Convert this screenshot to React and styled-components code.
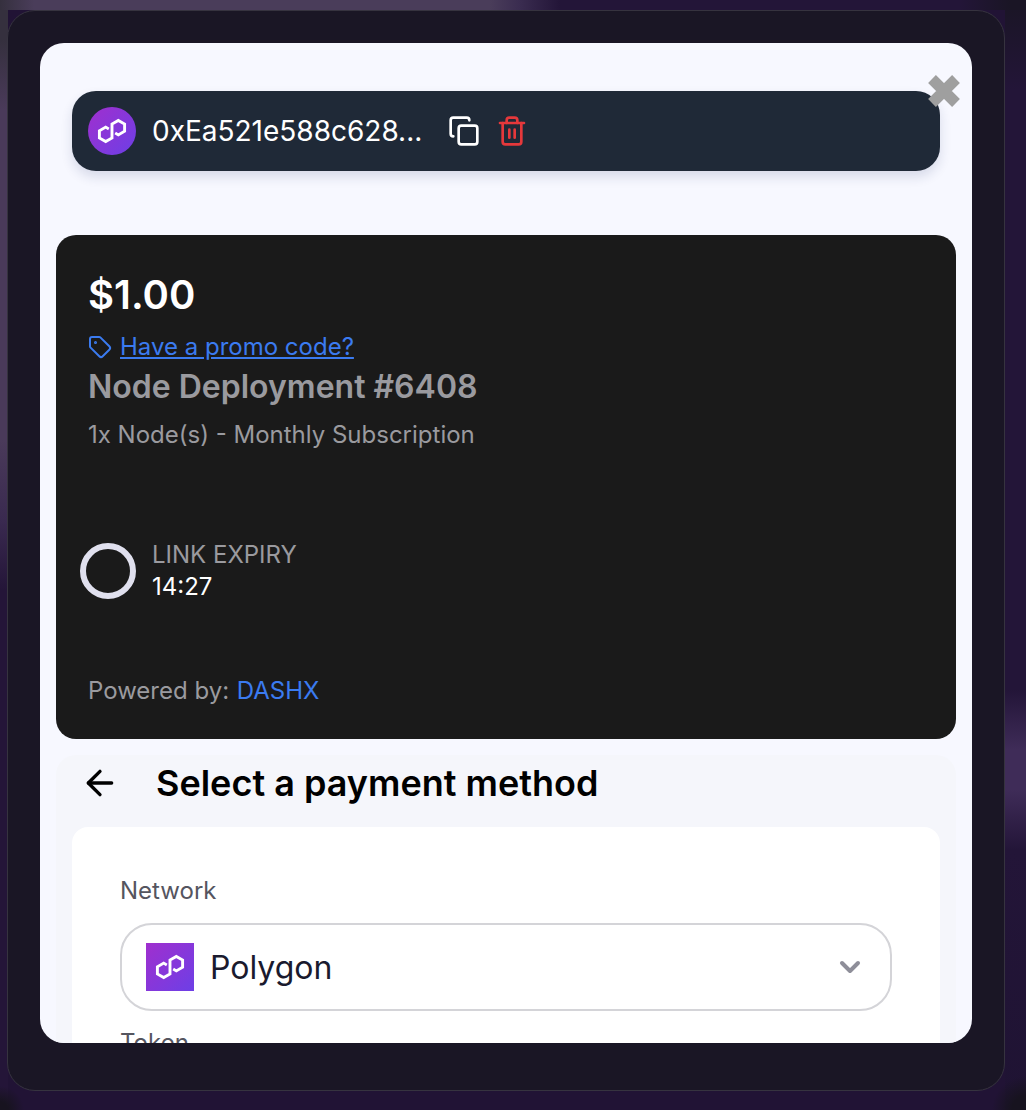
import React from 'react';
import styled, { createGlobalStyle } from 'styled-components';
import { ArrowLeft, ChevronDown, Copy, Tag, Trash2 } from 'lucide-react';

const GlobalStyle = createGlobalStyle`
    html, body {
        margin: 0;
        padding: 0;
        background: #1d1430;
    }
    * {
        box-sizing: border-box;
    }
`;

const PolygonMark = ({ size = 32 }) => (
    <svg width={size} height={size} viewBox="0 0 32 32" fill="none" stroke="#fff" strokeWidth="2.9" strokeLinejoin="miter">
        <path d="M12.8 13.9 9.7 12.1 3.4 15.74V22.96L9.7 26.6 16 22.96V9.04L22.3 5.4 28.6 9.04V16.26L22.3 19.9 19.2 18.1" />
    </svg>
);

const CloseMark = () => (
    <svg width="34" height="34" viewBox="0 0 34 34" fill="none" stroke="#9f9f9f" strokeWidth="11">
        <path d="M5 5 29 29M29 5 5 29" />
    </svg>
);

export default function App() {
    return (
        <Page>
            <GlobalStyle />
            <Frame>
                <Sheet>
                    <CloseButton>
                        <CloseMark />
                    </CloseButton>
                    <WalletBar>
                        <WalletLogo>
                            <PolygonMark />
                        </WalletLogo>
                        <WalletAddress>0xEa521e588c628...</WalletAddress>
                        <WalletActions>
                            <Copy size={32} color="#ffffff" strokeWidth={2} />
                            <Trash2 size={32} color="#e5383b" strokeWidth={2} />
                        </WalletActions>
                    </WalletBar>

                    <OrderCard>
                        <Price>$1.00</Price>
                        <PromoRow>
                            <Tag size={24} strokeWidth={2} />
                            <PromoLink>Have a promo code?</PromoLink>
                        </PromoRow>
                        <OrderTitle>Node Deployment #6408</OrderTitle>
                        <OrderDetail>1x Node(s) - Monthly Subscription</OrderDetail>
                        <ExpiryRow>
                            <ExpiryRing />
                            <ExpiryText>
                                <ExpiryLabel>LINK EXPIRY</ExpiryLabel>
                                <ExpiryTime>14:27</ExpiryTime>
                            </ExpiryText>
                        </ExpiryRow>
                        <PoweredBy>
                            Powered by: <PoweredName>DASHX</PoweredName>
                        </PoweredBy>
                    </OrderCard>

                    <PaymentPanel>
                        <PaymentHeader>
                            <ArrowLeft size={40} color="#000000" strokeWidth={2} />
                            <PaymentTitle>Select a payment method</PaymentTitle>
                        </PaymentHeader>
                        <FormCard>
                            <FieldLabel>Network</FieldLabel>
                            <SelectBox>
                                <NetworkLogo>
                                    <PolygonMark />
                                </NetworkLogo>
                                <SelectValue>Polygon</SelectValue>
                                <ChevronDown size={32} color="#8e8e99" strokeWidth={3} />
                            </SelectBox>
                            <FieldLabel $next>Token</FieldLabel>
                        </FormCard>
                    </PaymentPanel>
                </Sheet>
            </Frame>
        </Page>
    );
}

const Page = styled.div`
    width: 1026px;
    height: 1110px;
    overflow: hidden;
    padding: 10px 21px 19px 7px;
    font-family: Inter, 'Noto Sans', sans-serif;
    background:
        radial-gradient(circle at 0 1110px, #17131f 0, #17131f 8px, rgba(23, 19, 31, 0) 24px),
        radial-gradient(circle at 1026px 1110px, #17131f 0, #17131f 14px, rgba(23, 19, 31, 0) 34px),
        linear-gradient(90deg, #35303e 0, #4a3d5a 34px, #4a3d5a 490px, #3a2c50 520px, #231538 560px, #231538 960px, #1a1525 1010px) top / 100% 10px no-repeat,
        linear-gradient(180deg, #35303e 0, #35303e 40px, #4a3a5a 110px, #4a3a5a 440px, #3a2a50 520px, #241538 590px, #241538 100%) left / 8px 100% no-repeat,
        linear-gradient(180deg, #1a1525 0, #231538 90px, #231538 690px, #3f2c58 750px, #3f2c58 790px, #231538 850px, #1f1333 100%) right / 21px 100% no-repeat,
        #211335;
`;

const Frame = styled.div`
    height: 100%;
    padding: 32px;
    background: #1a1625;
    border: 1px solid #36333f;
    border-radius: 28px;
`;

const Sheet = styled.div`
    position: relative;
    height: 1000px;
    padding-top: 48px;
    overflow: hidden;
    background: #f7f8ff;
    border-radius: 24px;
`;

const CloseButton = styled.div`
    position: absolute;
    top: 31px;
    right: 11px;
    z-index: 2;
    display: flex;
`;

const WalletBar = styled.div`
    display: flex;
    align-items: center;
    height: 80px;
    margin: 0 32px;
    padding: 0 16px;
    background: #1f2937;
    border-radius: 24px;
    box-shadow: 0 6px 12px rgba(31, 41, 100, 0.14);
`;

const WalletLogo = styled.div`
    display: flex;
    align-items: center;
    justify-content: center;
    width: 48px;
    height: 48px;
    border-radius: 50%;
    background: linear-gradient(135deg, #a02fce, #6d3fe6);
`;

const WalletAddress = styled.div`
    width: 296px;
    margin-left: 16px;
    font-size: 28px;
    color: #ffffff;
    white-space: nowrap;
`;

const WalletActions = styled.div`
    display: flex;
    align-items: center;
    gap: 16px;
`;

const OrderCard = styled.div`
    height: 504px;
    margin: 64px 16px 0;
    padding: 40px 32px 0;
    background: #1a1a1a;
    border-radius: 20px;
`;

const Price = styled.div`
    font-size: 40px;
    font-weight: 600;
    line-height: 40px;
    color: #ffffff;
`;

const PromoRow = styled.div`
    display: flex;
    align-items: center;
    gap: 8px;
    height: 32px;
    margin-top: 16px;
    color: #3b7bf0;
`;

const PromoLink = styled.a`
    font-size: 24px;
    line-height: 32px;
    text-decoration: underline;
    color: #3b7bf0;
`;

const OrderTitle = styled.div`
    margin-top: 6px;
    font-size: 32px;
    font-weight: 600;
    line-height: 36px;
    color: #9a9a9f;
`;

const OrderDetail = styled.div`
    margin-top: 14px;
    font-size: 24px;
    line-height: 32px;
    color: #9a9a9f;
`;

const ExpiryRow = styled.div`
    display: flex;
    align-items: center;
    gap: 16px;
    margin: 88px 0 0 -8px;
`;

const ExpiryRing = styled.div`
    width: 56px;
    height: 56px;
    border: 6px solid #e0e0ee;
    border-radius: 50%;
`;

const ExpiryText = styled.div`
    display: flex;
    flex-direction: column;
`;

const ExpiryLabel = styled.div`
    font-size: 24px;
    line-height: 32px;
    color: #9a9a9f;
`;

const ExpiryTime = styled.div`
    font-size: 24px;
    line-height: 32px;
    color: #ffffff;
`;

const PoweredBy = styled.div`
    margin-top: 72px;
    font-size: 24px;
    line-height: 32px;
    color: #9a9a9f;
`;

const PoweredName = styled.span`
    margin-left: 1px;
    color: #3b7bf0;
`;

const PaymentPanel = styled.div`
    margin: 16px 16px 0;
    padding: 0 16px;
    background: #f5f6fb;
    border-radius: 20px 20px 0 0;
`;

const PaymentHeader = styled.div`
    display: flex;
    align-items: center;
    gap: 36px;
    height: 56px;
    margin-bottom: 16px;
    padding-left: 8px;
`;

const PaymentTitle = styled.div`
    font-size: 36px;
    font-weight: 600;
    color: #000000;
`;

const FormCard = styled.div`
    padding: 48px 48px 0;
    height: 240px;
    background: #ffffff;
    border-radius: 16px 16px 0 0;
`;

const FieldLabel = styled.div`
    margin-top: ${({ $next }) => ($next ? '16px' : '0')};
    font-size: 24px;
    line-height: 32px;
    color: #55555f;
`;

const SelectBox = styled.div`
    display: flex;
    align-items: center;
    height: 88px;
    margin-top: 16px;
    padding: 0 24px;
    border: 2px solid #d4d4d8;
    border-radius: 32px;
`;

const NetworkLogo = styled.div`
    display: flex;
    align-items: center;
    justify-content: center;
    width: 48px;
    height: 48px;
    background: linear-gradient(135deg, #a02fce, #6d3fe6);
`;

const SelectValue = styled.div`
    flex: 1;
    margin-left: 16px;
    font-size: 32px;
    color: #1a1a2e;
`;
